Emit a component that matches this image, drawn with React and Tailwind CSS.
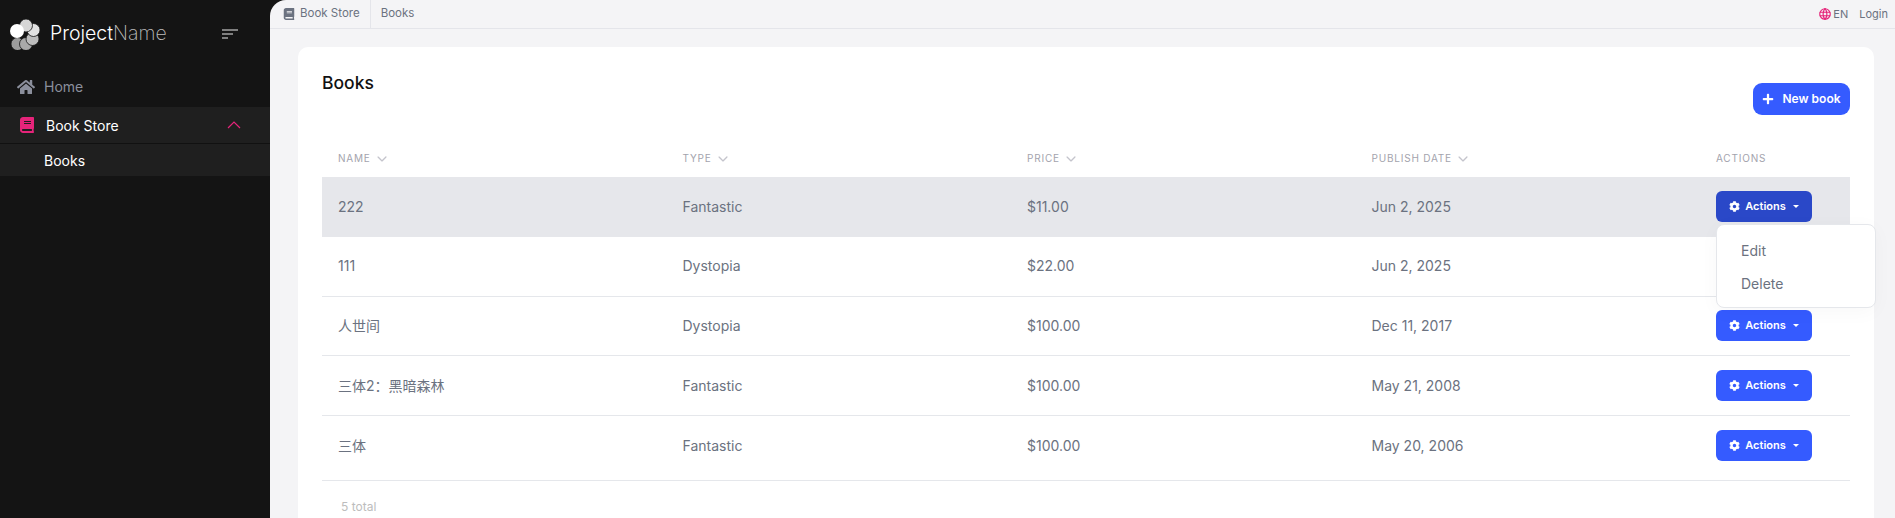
import { FaBook, FaCog, FaHome, FaPlus } from 'react-icons/fa';
import { IoIosArrowDown } from 'react-icons/io';
import { TbWorld } from 'react-icons/tb';

const books = [
  { name: '222', type: 'Fantastic', price: '$11.00', date: 'Jun 2, 2025', row: 'h-[60px] pb-[2px]', active: true },
  { name: '111', type: 'Dystopia', price: '$22.00', date: 'Jun 2, 2025', row: 'h-[60px] pb-[2px]' },
  { name: '人世间', type: 'Dystopia', price: '$100.00', date: 'Dec 11, 2017', row: 'h-[59px] pb-[1px]' },
  { name: '三体2：黑暗森林', type: 'Fantastic', price: '$100.00', date: 'May 21, 2008', row: 'h-[60px] pb-[1px]' },
  { name: '三体', type: 'Fantastic', price: '$100.00', date: 'May 20, 2006', row: 'h-[65px] pb-[5px]' },
];

const petals = [
  { x: 8.5, y: 26, fill: '#9c9c9c' },
  { x: 17, y: 26, fill: '#a9a9a9' },
  { x: 23.5, y: 21, fill: '#bdbdbd' },
  { x: 24.5, y: 12, fill: '#e2e2e2' },
  { x: 17, y: 7.5, fill: '#d6d6d6' },
];

const Logo = () => (
  <svg width="32" height="32" viewBox="0 0 32 32" className="shrink-0">
    {petals.map((p) => (
      <circle key={p.x} cx={p.x} cy={p.y} r="6.5" fill={p.fill} stroke="#141414" strokeWidth="0.8" />
    ))}
    <circle cx="8" cy="13" r="7" fill="#fff" />
  </svg>
);

const SortIcon = () => (
  <svg width="16" height="10" viewBox="0 0 16 10" className="text-[#a3a3a3]">
    <path d="M0 1h16M0 5h11M0 9h6" stroke="currentColor" strokeWidth="1.3" fill="none" />
  </svg>
);

const ActionsButton = ({ active }) => (
  <button
    className={`w-24 h-[31px] rounded-md flex items-center justify-center gap-[5px] text-white text-[11px] font-semibold ${
      active ? 'bg-[#2a48c8]' : 'bg-[#355bff]'
    }`}
  >
    <FaCog className="text-[11px]" />
    <span>Actions</span>
    <span className="ml-[2px] w-0 h-0 border-x-[3px] border-x-transparent border-t-[3px] border-t-white"></span>
  </button>
);

const HeaderCell = ({ label, sort }) => (
  <div className="w-[344.5px] shrink-0 pl-4 flex items-center gap-1 text-[10px] tracking-[0.08em] text-[#a3a3ad] uppercase">
    <span>{label}</span>
    {sort && <IoIosArrowDown className="text-[14px] text-[#c4c4cc]" />}
  </div>
);

const Sidebar = () => (
  <aside className="w-[270px] shrink-0 bg-[#141414] h-full">
    <div className="h-[67px] pl-[9px] pt-[1px] flex items-center">
      <Logo />
      <div className="ml-[9px] text-[19.5px] w-[172px] text-white">
        <span className="font-light">Project</span>
        <span className="font-extralight text-[#bdbdbd]">Name</span>
      </div>
      <SortIcon />
    </div>
    <div className="h-10 pb-[1px] flex items-center pl-[17px] text-[14px] text-[#8b8f9c]">
      <FaHome className="text-[18px] w-[18px]" />
      <span className="ml-[9px]">Home</span>
    </div>
    <div className="h-[37px] flex items-center pl-[19px] pr-[29px] bg-[#1f1f1f] border-b border-[#111] text-[14px] text-white">
      <FaBook className="text-[16px] text-[#e6247a]" />
      <span className="ml-[11px] flex-1">Book Store</span>
      <svg width="14" height="8" viewBox="0 0 14 8" fill="none" stroke="#e6247a" strokeWidth="1.2">
        <path d="M1 7l6-6 6 6" />
      </svg>
    </div>
    <div className="h-[32px] flex items-center pl-[44px] bg-[#1f1f1f] text-[14px] text-white">Books</div>
  </aside>
);

const TopBar = () => (
  <div className="h-[29px] flex items-center justify-between border-b border-[#e4e5ea] pl-[13px] pr-[7px] text-[11.5px] text-[#6b7280]">
    <div className="flex items-center h-full">
      <FaBook className="text-[12px] text-[#6b7280]" />
      <span className="ml-[5px] pr-[10px] h-full flex items-center border-r border-[#e4e5ea]">Book Store</span>
      <span className="ml-[10px]">Books</span>
    </div>
    <div className="flex items-center text-[11px]">
      <TbWorld className="text-[14px] text-[#e6247a]" />
      <span className="ml-[1px]">EN</span>
      <span className="ml-[11px]">Login</span>
    </div>
  </div>
);

const BookTable = () => (
  <div className="mt-[26px]">
    <div className="flex h-[36px] pb-[1px]">
      <HeaderCell label="Name" sort />
      <HeaderCell label="Type" sort />
      <HeaderCell label="Price" sort />
      <HeaderCell label="Publish date" sort />
      <HeaderCell label="Actions" />
    </div>
    {books.map((b) => (
      <div
        key={b.name}
        className={`relative flex items-center text-[14px] text-[#6b7280] ${b.row} ${
          b.active ? 'bg-[#e6e7eb]' : 'border-b border-[#e5e7eb]'
        }`}
      >
        <div className="w-[344.5px] shrink-0 pl-4">{b.name}</div>
        <div className="w-[344.5px] shrink-0 pl-4">{b.type}</div>
        <div className="w-[344.5px] shrink-0 pl-4">{b.price}</div>
        <div className="w-[344.5px] shrink-0 pl-4">{b.date}</div>
        <div className="pl-4">
          {b.name !== '111' && <ActionsButton active={b.active} />}
        </div>
        {b.active && (
          <div className="absolute z-10 left-[1394px] top-[47px] w-40 h-[84px] py-[9px] bg-white border border-[#e5e7eb] rounded-lg shadow-[0_4px_20px_rgba(0,0,0,0.03)] text-[14px]">
            <div className="h-[33px] pl-[24px] flex items-center">Edit</div>
            <div className="h-[33px] pl-[24px] flex items-center">Delete</div>
          </div>
        )}
      </div>
    ))}
    <div className="mt-[17px] pl-[19px] text-[12px] text-[#bdbdbd]">5 total</div>
  </div>
);

const App = () => (
  <div className="h-[518px] w-[1895px] overflow-hidden flex bg-[#141414] font-['Inter','Noto_Sans_CJK_SC',sans-serif]">
    <Sidebar />
    <main className="flex-1 bg-[#f4f4f6] rounded-tl-[16px] overflow-hidden">
      <TopBar />
      <div className="pl-[28px] pr-[21px] pt-[18px]">
        <div className="bg-white rounded-[10px] px-6 pt-[22px] h-[500px]">
          <div className="flex justify-between">
            <h1 className="text-[17.5px] font-medium text-[#111] leading-[28px]">Books</h1>
            <button className="mt-[14px] w-[97px] h-8 rounded-[9px] bg-[#355bff] text-white text-[12px] font-semibold flex items-center justify-center gap-2">
              <FaPlus className="text-[12px]" />
              New book
            </button>
          </div>
          <BookTable />
        </div>
      </div>
    </main>
  </div>
);

export default App;
